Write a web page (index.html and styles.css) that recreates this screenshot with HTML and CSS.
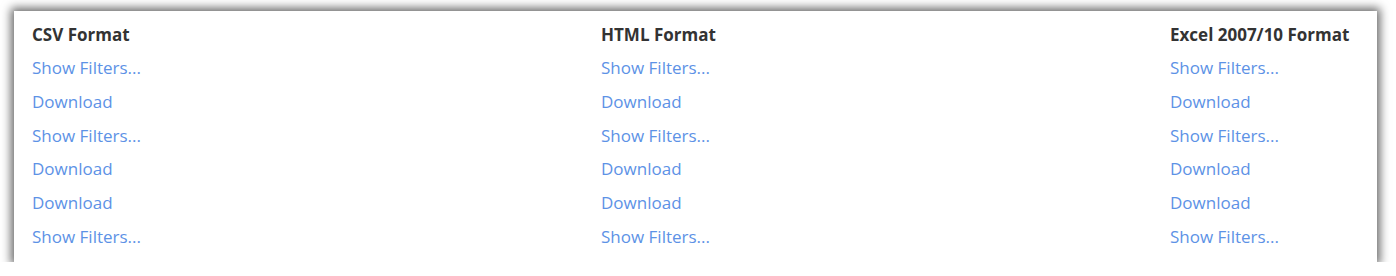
FILE: index.html
```html
<!DOCTYPE html>
<html lang="en">
<head>
<meta charset="UTF-8">
<title>Export Formats</title>
<link rel="stylesheet" href="styles.css">
</head>
<body>
<div class="export-card">
  <div class="export-grid">
    <div class="format-title">CSV Format</div>
    <div class="format-title">HTML Format</div>
    <div class="format-title">Excel 2007/10 Format</div>

    <a href="#" class="export-link">Show Filters...</a>
    <a href="#" class="export-link">Show Filters...</a>
    <a href="#" class="export-link">Show Filters...</a>

    <a href="#" class="export-link">Download</a>
    <a href="#" class="export-link">Download</a>
    <a href="#" class="export-link">Download</a>

    <a href="#" class="export-link">Show Filters...</a>
    <a href="#" class="export-link">Show Filters...</a>
    <a href="#" class="export-link">Show Filters...</a>

    <a href="#" class="export-link">Download</a>
    <a href="#" class="export-link">Download</a>
    <a href="#" class="export-link">Download</a>

    <a href="#" class="export-link">Download</a>
    <a href="#" class="export-link">Download</a>
    <a href="#" class="export-link">Download</a>

    <a href="#" class="export-link">Show Filters...</a>
    <a href="#" class="export-link">Show Filters...</a>
    <a href="#" class="export-link">Show Filters...</a>
  </div>
</div>
</body>
</html>
```

FILE: styles.css
```css
body {
    margin: 0;
    padding: 11px 19px 0 14px;
    background-color: #ffffff;
    font-family: 'Open Sans', sans-serif;
}

.export-card {
    background-color: #ffffff;
    padding: 7px 10px 8px 18px;
    box-shadow: 0 0 9px 3px rgba(0, 0, 0, 0.6);
}

.export-grid {
    display: grid;
    grid-template-columns: 569px 569px 1fr;
}

.format-title {
    font-size: 17px;
    font-weight: 700;
    line-height: 33px;
    color: #333333;
}

.export-link {
    font-size: 17px;
    line-height: 33.8px;
    color: #5d92e6;
    text-decoration: none;
}
```
